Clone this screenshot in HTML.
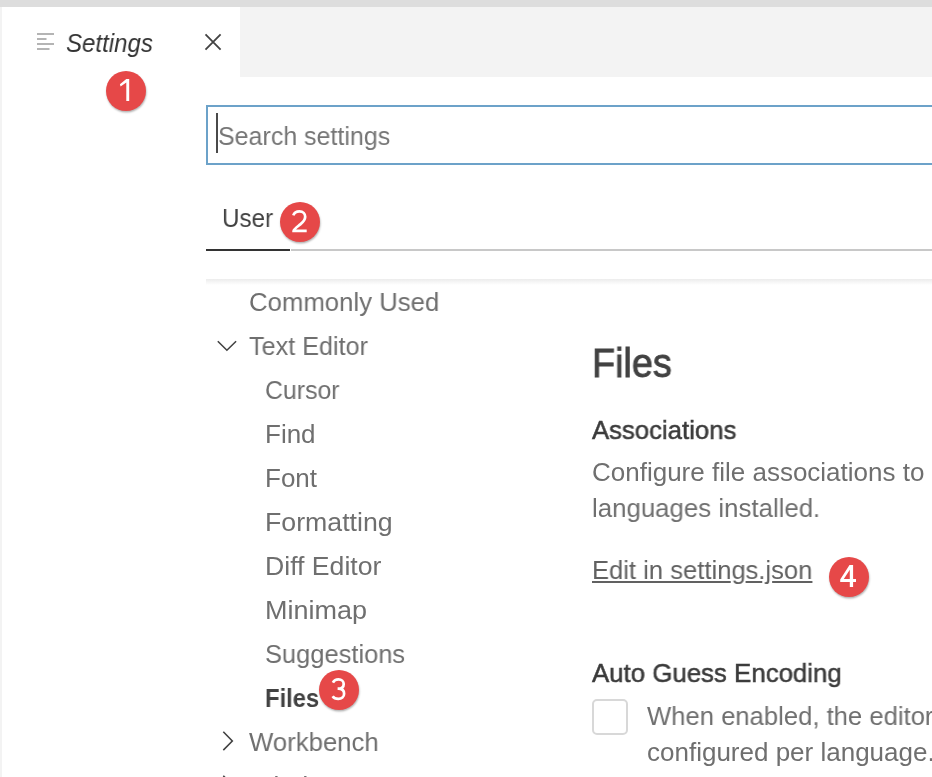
<!DOCTYPE html>
<html><head><meta charset="utf-8">
<style>
html,body{margin:0;padding:0;}
body{width:932px;height:777px;position:relative;overflow:hidden;background:#fff;font-family:"Liberation Sans",sans-serif;}
.a{position:absolute;white-space:nowrap;}
.t{position:absolute;white-space:nowrap;will-change:transform;font-size:26px;line-height:26px;color:#6f6f6f;transform-origin:0 0;}
.badge{position:absolute;width:40px;height:40px;border-radius:50%;background:#e64848;box-shadow:0.5px 1.5px 2px rgba(0,0,0,0.3);color:#fff;font-size:30px;line-height:40px;text-align:center;}
</style></head>
<body>
<!-- top strip -->
<div class="a" style="left:0;top:0;width:932px;height:7px;background:#dddddd"></div>
<!-- left strip -->
<div class="a" style="left:0;top:7px;width:2px;height:770px;background:#f3f3f3"></div>
<!-- tab bar -->
<div class="a" style="left:240px;top:7px;width:692px;height:70px;background:#f3f3f3"></div>
<!-- tab icon -->
<svg class="a" style="left:36px;top:32px" width="20" height="20" viewBox="0 0 20 20">
<g fill="#b4b4b4"><rect x="1" y="1" width="17" height="2"/><rect x="1" y="6" width="9.5" height="2"/><rect x="1" y="11" width="17" height="2"/><rect x="1" y="16" width="12.5" height="2"/></g>
</svg>
<div class="t" style="transform:scaleX(0.925);left:66px;top:30px;color:#333;font-style:italic">Settings</div>
<!-- close X -->
<svg class="a" style="left:202px;top:31px" width="22" height="22" viewBox="0 0 22 22">
<path d="M3.5 3.4 L18.6 18.6 M18.6 3.4 L3.5 18.6" stroke="#424242" stroke-width="1.8"/>
</svg>

<!-- search box -->
<div class="a" style="left:206px;top:105px;width:740px;height:56px;border:2px solid #6ca2c9;"></div>
<div class="a" style="left:216px;top:113px;width:2px;height:40px;background:#4a4a4a"></div>
<div class="t" style="transform:scaleX(0.961);left:218px;top:123px;color:#767676">Search settings</div>

<!-- User tab -->
<div class="t" style="transform:scaleX(0.931);left:222px;top:205px;color:#424242">User</div>
<div class="a" style="left:206px;top:249px;width:84px;height:2px;background:#333"></div>
<div class="a" style="left:291px;top:249px;width:641px;height:2px;background:#c8c8c8"></div>

<!-- shadow -->
<div class="a" style="left:206px;top:279px;width:726px;height:6px;background:linear-gradient(#ececec,#fff)"></div>

<!-- tree -->
<div class="t" style="transform:scaleX(0.99);left:249px;top:289px">Commonly Used</div>
<svg class="a" style="left:215px;top:337px" width="24" height="18" viewBox="0 0 24 18">
<path d="M2.8 4.3 L11.9 13.2 L21.1 4.3" stroke="#424242" stroke-width="1.6" fill="none"/>
</svg>
<div class="t" style="transform:scaleX(0.968);left:249px;top:333px">Text Editor</div>
<div class="t" style="transform:scaleX(0.955);left:265px;top:377px">Cursor</div>
<div class="t" style="left:265px;top:421px">Find</div>
<div class="t" style="left:265px;top:465px">Font</div>
<div class="t" style="transform:scaleX(1.027);left:265px;top:509px">Formatting</div>
<div class="t" style="transform:scaleX(1.024);left:265px;top:553px">Diff Editor</div>
<div class="t" style="transform:scaleX(1.038);left:265px;top:597px">Minimap</div>
<div class="t" style="transform:scaleX(0.979);left:265px;top:641px">Suggestions</div>
<div class="t" style="transform:scaleX(0.915);left:265px;top:685px;font-weight:bold;color:#424242">Files</div>
<svg class="a" style="left:218px;top:729px" width="18" height="24" viewBox="0 0 18 24">
<path d="M5.3 2.8 L14.3 11.95 L5.3 21.1" stroke="#424242" stroke-width="1.6" fill="none"/>
</svg>
<div class="t" style="transform:scaleX(0.99);left:249px;top:729px">Workbench</div>
<svg class="a" style="left:218px;top:773px" width="18" height="24" viewBox="0 0 18 24">
<path d="M5.3 2.8 L14.3 11.95 L5.3 21.1" stroke="#424242" stroke-width="1.6" fill="none"/>
</svg>
<div class="t" style="left:249px;top:773px">Window</div>

<!-- content -->
<div class="t" style="left:592px;transform:scaleX(0.944);top:343px;font-size:40px;line-height:40px;-webkit-text-stroke:0.9px #424242;color:#424242">Files</div>
<div class="t" style="transform:scaleX(0.989);left:592px;top:417px;-webkit-text-stroke:0.5px #3b3b3b;color:#3b3b3b">Associations</div>
<div class="t" style="left:592px;top:459px">Configure file associations to</div>
<div class="t" style="transform:scaleX(0.993);left:592px;top:495px">languages installed.</div>
<div class="t" style="transform:scaleX(0.984);left:592px;top:557px;text-decoration:underline;color:#616161">Edit in settings.json</div>
<div class="t" style="transform:scaleX(0.993);left:592px;top:660px;-webkit-text-stroke:0.5px #3b3b3b;color:#3b3b3b">Auto Guess Encoding</div>
<div class="a" style="left:592px;top:699px;width:32px;height:32px;border:2px solid #d8d8d8;border-radius:5px"></div>
<div class="t" style="left:647px;top:703px;transform:scaleX(0.986)">When enabled, the editor will attempt to guess the character set</div>
<div class="t" style="left:647px;top:739px">configured per language.</div>

<!-- badges -->
<div class="badge" style="left:106px;top:71px"><svg width="40" height="40" viewBox="0 0 40 40" style="position:absolute;left:0;top:0"><path d="M20.3 7.9 L23.2 7.9 L23.2 30 L20.3 30 L20.3 11.6 L14.6 15.6 L13.9 13.2 Z" fill="#fff"/></svg></div>
<div class="badge" style="left:280px;top:202px"><svg width="40" height="40" viewBox="0 0 40 40" style="position:absolute;left:0;top:0"><path d="M13.3 13.4 C14.2 10.8 16.5 9.45 19.5 9.45 C23 9.45 25.2 11.6 25.2 14.8 C25.2 17.9 23.4 19.9 20.3 22.4 C16.9 25.1 13.6 27.3 13.6 28.95 L26.7 28.95" stroke="#fff" stroke-width="2.7" fill="none"/></svg></div>
<div class="badge" style="left:319px;top:670px"><svg width="40" height="40" viewBox="0 0 40 40" style="position:absolute;left:0;top:0"><path d="M13.9 12.6 C15 10.5 17 9.45 19.5 9.45 C22.6 9.45 24.7 11.3 24.7 14 C24.7 16.9 22.6 18.7 19.2 18.7 L18.6 18.7 M19.2 18.7 C23 18.7 25.1 20.7 25.1 23.8 C25.1 27 22.6 28.95 19.3 28.95 C16.8 28.95 14.7 28 13.6 26.3" stroke="#fff" stroke-width="2.7" fill="none"/></svg></div>
<div class="badge" style="left:829px;top:557px"><svg width="40" height="40" viewBox="0 0 40 40" style="position:absolute;left:0;top:0"><path d="M20.5 8 L24.1 8 L24.1 22 L27 22 L27 24.9 L24.1 24.9 L24.1 30.1 L20.8 30.1 L20.8 24.9 L11.2 24.9 L11.2 22.4 Z M20.8 12.7 L20.8 22 L14.8 22 Z" fill="#fff" fill-rule="evenodd"/></svg></div>
</body></html>
